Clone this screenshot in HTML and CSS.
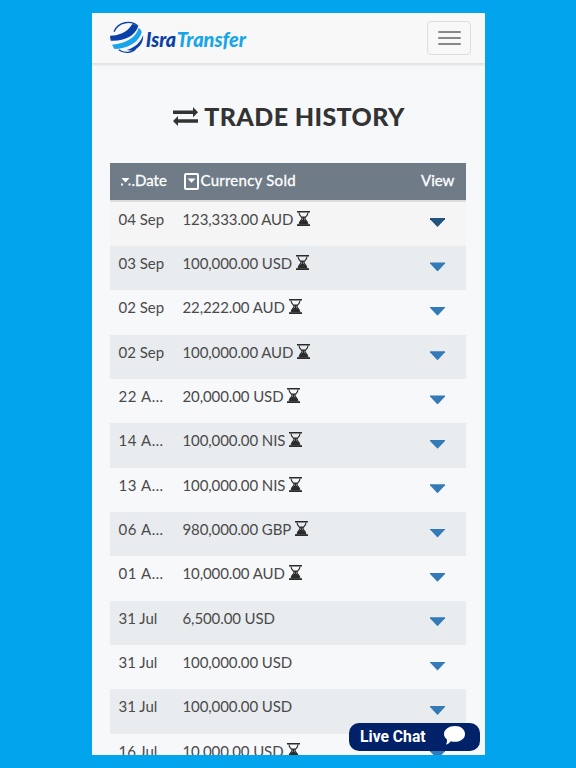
FILE: index.html
```html
<!DOCTYPE html>
<html>
<head>
<meta charset="utf-8">
<meta name="viewport" content="width=device-width, initial-scale=1">
<title>Trade History</title>
<link rel="stylesheet" href="styles.css">
</head>
<body>

<svg class="symbols">
  <symbol id="hourglass" viewBox="0 0 13 15">
    <path d="M0 0H13V1.6H0zM0 13.2H13V15H0z"/>
    <path d="M2 1.5C2 5 5 5.8 5 7.4S2 10 2 13.5M11 1.5C11 5 8 5.8 8 7.4S11 10 11 13.5" fill="none" stroke="#2b2b2b" stroke-width="1.1"/>
    <path d="M4 5.4H9L7.3 7.2V8.4C9 9.3 10 10.2 10.6 11.2V13.4H2.4V11.2C3 10.2 4 9.3 5.7 8.4V7.2z"/>
  </symbol>
</svg>

<div class="phone">
  <div class="navbar">
    <svg class="logo" viewBox="60 40 410 100">
      <path d="M72 72C84 42 124 36 144 56M86 126C102 138 124 136 136 124" fill="none" stroke="#0a3fa8" stroke-width="4"/>
      <path class="dark" d="M60 84C84 84 110 76 127 49Q136 48 144 57C134 84 104 101 62 99Q60 92 60 84z"/>
      <path class="light" d="M66 111C106 107 138 90 146 60Q154 66 155 74C146 106 110 124 73 124z"/>
      <path class="dark" d="M110 127C136 119 152 104 159 82C161 106 146 124 124 129z"/>
      <text class="dark" x="167" y="117" textLength="91" lengthAdjust="spacingAndGlyphs">Isra</text>
      <text class="light" x="260" y="117" textLength="207" lengthAdjust="spacingAndGlyphs">Transfer</text>
    </svg>
    <button type="button" class="menuBtn">
      <span></span>
      <span></span>
      <span></span>
    </button>
  </div>

  <h1 class="title">
    <svg class="arrows" viewBox="0 0 25 19"><path d="M0 3.4H20V0L25 5.2L20 10.2V7H0zM25 12.2H5V9L0 14L5 19V15.8H25z"/></svg>
    <span>TRADE HISTORY</span>
  </h1>

  <div class="trades">
    <div class="row head">
      <div class="date"><svg class="sortDots" viewBox="0 0 13 8"><path d="M2.500 0H10.500L6.500 4.500z"/><path d="M2 5.500h2v2H2zM9.500 5.500h2v2h-2z"/></svg>.Date</div>
      <div class="sold"><svg class="sortBox" viewBox="0 0 15 17"><rect x="1" y="1" width="13" height="15" rx="1" fill="none" stroke="#fff" stroke-width="2"/><path d="M3.500 5.500H11.500L7.500 9.800z"/></svg>Currency Sold</div>
      <div class="view">View</div>
    </div>
    <div class="row active"><div class="date">04 Sep</div><div class="sold">123,333.00 AUD<svg class="wait"><use href="#hourglass"/></svg></div><div class="view"><i class="caret"></i></div></div>
    <div class="row"><div class="date">03 Sep</div><div class="sold">100,000.00 USD<svg class="wait"><use href="#hourglass"/></svg></div><div class="view"><i class="caret"></i></div></div>
    <div class="row"><div class="date">02 Sep</div><div class="sold">22,222.00 AUD<svg class="wait"><use href="#hourglass"/></svg></div><div class="view"><i class="caret"></i></div></div>
    <div class="row"><div class="date">02 Sep</div><div class="sold">100,000.00 AUD<svg class="wait"><use href="#hourglass"/></svg></div><div class="view"><i class="caret"></i></div></div>
    <div class="row"><div class="date aug">22 A…</div><div class="sold">20,000.00 USD<svg class="wait"><use href="#hourglass"/></svg></div><div class="view"><i class="caret"></i></div></div>
    <div class="row"><div class="date aug">14 A…</div><div class="sold">100,000.00 NIS<svg class="wait"><use href="#hourglass"/></svg></div><div class="view"><i class="caret"></i></div></div>
    <div class="row"><div class="date aug">13 A…</div><div class="sold">100,000.00 NIS<svg class="wait"><use href="#hourglass"/></svg></div><div class="view"><i class="caret"></i></div></div>
    <div class="row"><div class="date aug">06 A…</div><div class="sold">980,000.00 GBP<svg class="wait"><use href="#hourglass"/></svg></div><div class="view"><i class="caret"></i></div></div>
    <div class="row"><div class="date aug">01 A…</div><div class="sold">10,000.00 AUD<svg class="wait"><use href="#hourglass"/></svg></div><div class="view"><i class="caret"></i></div></div>
    <div class="row"><div class="date">31 Jul</div><div class="sold">6,500.00 USD</div><div class="view"><i class="caret"></i></div></div>
    <div class="row"><div class="date">31 Jul</div><div class="sold">100,000.00 USD</div><div class="view"><i class="caret"></i></div></div>
    <div class="row"><div class="date">31 Jul</div><div class="sold">100,000.00 USD</div><div class="view"><i class="caret"></i></div></div>
    <div class="row"><div class="date">16 Jul</div><div class="sold">10,000.00 USD<svg class="wait"><use href="#hourglass"/></svg></div><div class="view"><i class="caret"></i></div></div>
  </div>

  <button type="button" class="chat">
    <span>Live Chat</span>
    <svg viewBox="0 0 20 18"><path d="M10.500 0C16 0 20 3.200 20 7.600S16 15 10.500 15C9 15 7.600 14.800 6.500 14.400C5.200 16.200 3.600 17.300 1.800 17.600C2.700 16.300 3 14.600 2.800 12.800C1 11.500 0 9.700 0 7.600C0 3.200 5 0 10.500 0z"/></svg>
  </button>
</div>

</body>
</html>
```
FILE: styles.css
```css
body {
  margin: 0;
  padding: 13px 91px 13px 92px;
  height: 742px;
  overflow: hidden;
  background-color: #02a4ee;
  font-family: Lato, "Liberation Sans", sans-serif;
  color: #4a4a4a;
}

.symbols {
  position: absolute;
  width: 0;
  height: 0;
}

.phone {
  position: relative;
  height: 742px;
  overflow: hidden;
  background-color: #f7f8fa;
}

.navbar {
  box-sizing: border-box;
  height: 51px;
  padding: 8px 14px 0 18px;
  display: flex;
  justify-content: space-between;
  background-color: #f8f8f8;
  border-bottom: 1px solid #e3e3e3;
  box-shadow: 0 1px 2px #ddd;
}

.logo {
  width: 137px;
  height: 33.4px;
  overflow: visible;
}
.logo text {
  font: italic 900 63px Lato, sans-serif;
}
.dark { fill: #0a3fa8; }
.light { fill: #18a5ea; }

.menuBtn {
  box-sizing: border-box;
  width: 44px;
  height: 34px;
  padding: 0;
  display: flex;
  flex-direction: column;
  align-items: center;
  justify-content: center;
  gap: 4px;
  border: 1px solid #ddd;
  border-radius: 4px;
  background: transparent;
}
.menuBtn span {
  width: 23px;
  height: 2px;
  border-radius: 1px;
  background-color: #888;
}

.title {
  margin: 36px 0 0;
  height: 32px;
  line-height: 32px;
  display: flex;
  justify-content: center;
  align-items: center;
  gap: 6px;
  font-size: 25px;
  font-weight: 900;
  letter-spacing: 0.4px;
  color: #333;
}
.title span { margin-right: -1px; }
.arrows {
  width: 25px;
  height: 19px;
  fill: #333;
}

.trades {
  margin: 31px 19px 0 18px;
}

.row {
  box-sizing: border-box;
  height: 44.35px;
  padding: 7px 12px 0 8.5px;
  display: grid;
  grid-template-columns: 64px 1fr 33px;
  font-size: 15px;
  line-height: 20px;
  white-space: nowrap;
}
.row:nth-child(odd) { background-color: #e9ecef; }
.row.active { background-color: #f5f5f5; }
.row .sold { letter-spacing: -0.1px; }
.row .aug { letter-spacing: 0.6px; }

.row.head {
  height: 38.6px;
  background-color: #6f7b87;
  border-bottom: 2px solid #ddd;
  color: #fff;
  -webkit-text-stroke: 0.3px #fff;
}
.row.head .sold { letter-spacing: 0.25px; }
.head svg { fill: #fff; }
.sortDots {
  width: 13px;
  height: 8px;
}
.sortBox {
  width: 15px;
  height: 17px;
  margin: 0 2px 0 1px;
  vertical-align: -4px;
}

.wait {
  width: 13px;
  height: 15px;
  margin-left: 4px;
  vertical-align: -1px;
  fill: #2b2b2b;
}

.caret {
  display: block;
  margin: 9.5px auto 0;
  width: 15px;
  height: 9px;
  background-color: #337ab7;
  clip-path: polygon(0 0, 100% 0, 100% 12%, 50% 100%, 0 12%);
}
.active .caret { background-color: #23527c; }

/* floats over the trades */
.chat {
  box-sizing: border-box;
  position: absolute;
  right: 5px;
  bottom: 4px;
  width: 131px;
  height: 28.5px;
  padding: 0 15px 0 11px;
  display: flex;
  align-items: center;
  justify-content: space-between;
  border: none;
  border-radius: 10px;
  background-color: #012169;
  color: #fff;
  font: bold 15.7px Roboto, sans-serif;
}
.chat svg {
  width: 21px;
  height: 19px;
  margin-bottom: 3px;
  fill: #fff;
}
```
